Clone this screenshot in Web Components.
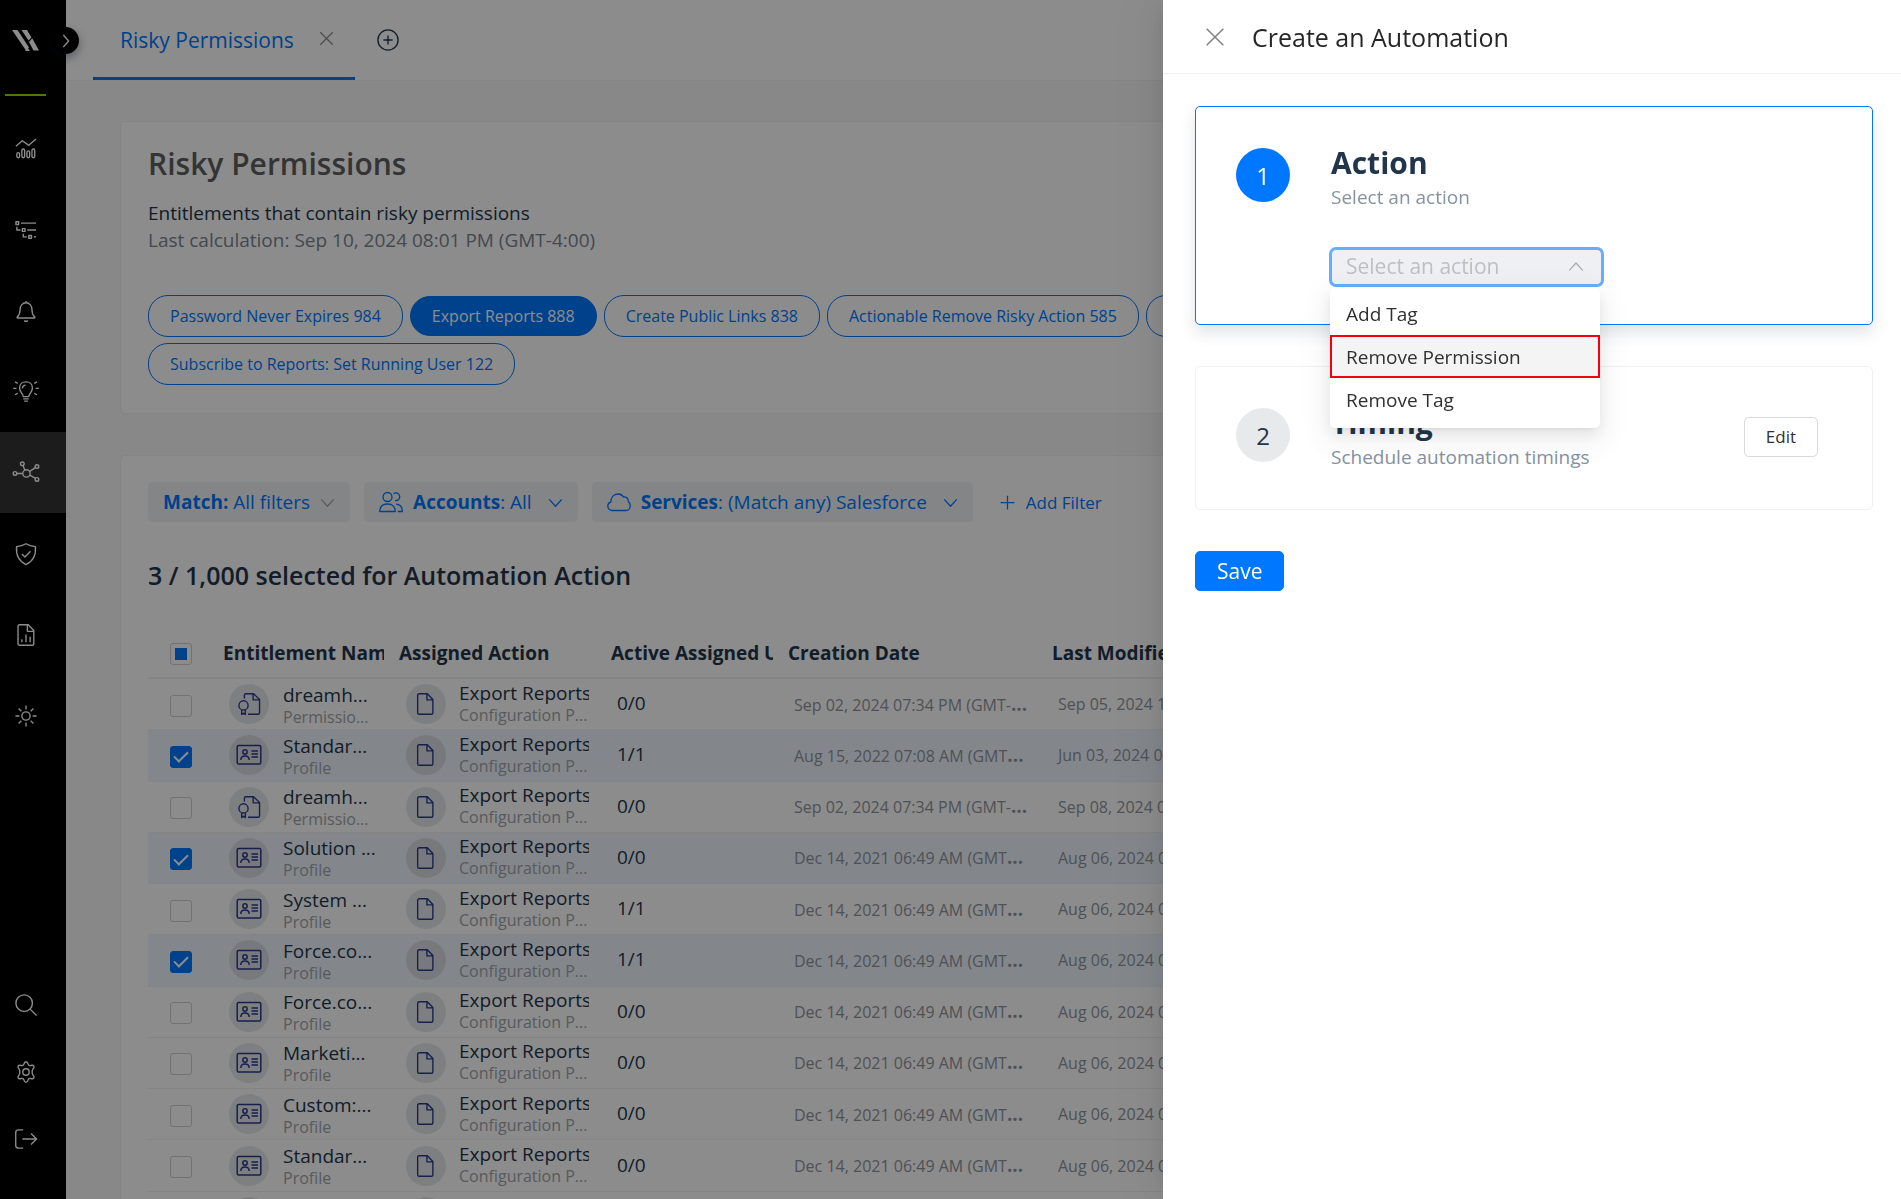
<!DOCTYPE html>
<html lang="en">
<head>
<meta charset="utf-8">
<title>Risky Permissions</title>
<style>
  html, body { height: 100%; }
  body { margin: 0; overflow: hidden; font-family: "Open Sans", "Noto Sans", sans-serif; color: #22364b; }
</style>
</head>
<body>
<app-shell></app-shell>

<script>
const ICONS = {
  logo: '<g fill="currentColor" stroke="none"><path d="M0 0h5.5l11.5 17.5-3 3z"/><path d="M9.500 0h5.500l4.500 7.500-3 3z"/><path d="M17 12l3.200-3.800L27 20.500h-5.500z"/><path d="M13 21l2.500-3.200L18 21z"/></g>',
  right: '<path d="M8 3l8 9-8 9"/>',
  down: '<path d="M2 7l10 11L22 7"/>',
  up: '<path d="M2 17L12 6l10 11"/>',
  close: '<path d="M2 2l20 20M22 2L2 22"/>',
  plus: '<path d="M12 1v22M1 12h22"/>',
  addCircle: '<circle cx="12" cy="12" r="11"/><path d="M12 7v10M7 12h10"/>',
  chart: '<path d="M1 9l7-6 7 5 8-7"/><rect x="2" y="16" width="3" height="5.500" rx="1.500"/><rect x="7.500" y="12" width="3" height="9.500" rx="1.500"/><rect x="13" y="14" width="3" height="7.500" rx="1.500"/><rect x="18.500" y="12" width="3" height="9.500" rx="1.500"/>',
  tree: '<rect x="1" y="3" width="3" height="3"/><path d="M6.500 4.500H23M2 8.500v3.500h4"/><rect x="8" y="10.500" width="3" height="3"/><path d="M13.500 12H23M9 16v3.500h4"/><rect x="15" y="18" width="3" height="3"/><path d="M20.500 19.500H23"/>',
  bell: '<path d="M12 1v2M2.500 18.500c2-2 3-4 3-8C5.500 6 8.500 3 12 3s6.500 3 6.500 7.500c0 4 1 6 3 8 .4.600.2 1.200-.5 1.200H3c-.7 0-.9-.6-.5-1.200zM10 22.500q2 1.500 4 0"/>',
  bulb: '<path d="M9 17c0-3-4-4.500-4-9.500C5 3.500 8 1 12 1s7 2.500 7 6.500c0 5-4 6.500-4 9.500zM9 19.500h6M10 22h4M8 8c.2-2 1.500-3.500 3.500-3.500M-2 8h3.500M22.500 8H26M0 1l3 1.600M24 1l-3 1.600M0 15l3-1.600M24 15l-3-1.600"/>',
  nodes: '<circle cx="12.500" cy="12.500" r="4"/><circle cx="0" cy="12.500" r="2"/><circle cx="8" cy="2" r="2"/><circle cx="24" cy="5" r="2"/><circle cx="24" cy="19" r="2"/><path d="M2 12.500h6.500M8.800 4l1.900 4.800M22.300 6.200L16 10.200M22.300 17.900l-6.200-3.500"/>',
  shield: '<path d="M12 .8c3 1.700 6.500 2.700 10.300 3.200C23 13 20 20 12 23.500 4 20 1 13 1.700 4 5.500 3.500 9 2.500 12 .8zM7.500 12l3.300 3.200L17 9"/>',
  report: '<path d="M5 .8h9.500L20.500 7v14.500c0 1-.7 1.700-1.700 1.700H5c-1 0-1.700-.7-1.700-1.700v-19C3.300 1.500 4 .8 5 .8zM13.500 1v7h7M7.500 20v-3.500M12 20v-8.500M16.500 20v-6"/>',
  sun: '<circle cx="12" cy="12" r="4.500"/><path d="M12 .5v4.300M12 19.200v4.300M.5 12h4.300M19.200 12h4.300M3.900 3.900l3 3M17.100 17.100l3 3M3.900 20.100l3-3M17.100 6.900l3-3"/>',
  search: '<circle cx="10" cy="10" r="9"/><path d="M16.500 16.500l7 7"/>',
  gear: '<circle cx="12" cy="12" r="3.500"/><path d="M9.800 3.200C10.300 1.300 11 .8 12 .8s1.700.5 2.200 2.400c.4 1.500 1.600 2.100 3 1.700 2-.6 2.900-.3 3.400.6s.400 1.800-1 3.200c-1.200 1.200-1.200 5.400 0 6.600 1.400 1.400 1.500 2.300 1 3.200s-1.400 1.200-3.400.6c-1.400-.4-2.600.2-3 1.700-.5 1.900-1.200 2.400-2.200 2.400s-1.700-.5-2.200-2.400c-.4-1.500-1.600-2.100-3-1.700-2 .6-2.900.3-3.400-.6s-.400-1.800 1-3.200c1.200-1.200 1.200-5.400 0-6.600-1.400-1.400-1.500-2.300-1-3.200s1.400-1.200 3.400-.6c1.400.4 2.600-.2 3-1.700z"/>',
  logout: '<path d="M9 2H4C2 2 .8 3 .8 5v14c0 2 1.200 3 3.200 3h5M8 12h15.500M17.500 6l6 6-6 6"/>',
  users: '<circle cx="8.500" cy="7" r="4.500"/><path d="M.8 21.500c0-5 3-7.500 7.700-7.500s7.700 2.500 7.700 7.500zM14.500 3.800a3.800 3.800 0 1 1 1.500 6.700M17 14.200c4 .2 6.300 2.800 6.300 7.300h-4.500"/>',
  cloud: '<path d="M5 20.500C2.500 20.500.8 18.500.8 16c0-2 1.200-3.500 3-4C4 7.500 6.500 4 11 4c2.500 0 4.500 1.200 5.500 3 3-.5 5 1.500 4.700 4.500 1.500.8 2 2.500 2 4.500 0 2.500-1.700 4.500-4 4.500z"/>',
  file: '<path d="M4.500.8h9L19.500 7v14.500c0 1-.6 1.700-1.600 1.700H4.500c-1 0-1.600-.7-1.600-1.700v-19c0-1 .6-1.700 1.600-1.700zM13 1v6.500h6.500"/>',
  cert: '<path d="M7 6V2.500C7 1.500 7.600.8 8.600.8H17L23.500 7v14.500c0 1-.6 1.700-1.600 1.700h-11M16.500 1v6.500h7"/><circle cx="6" cy="13.500" r="5"/><path d="M4 18.500v5l2-1.500 2 1.500v-5"/>',
  idcard: '<rect x=".2" y="2.500" width="23.600" height="18.500" rx="1.500"/><circle cx="8" cy="9" r="2.200"/><path d="M3.800 17c0-2.500 1.500-4 4.200-4s4.200 1.500 4.200 4M14.500 8h6.500M14.500 11h6.500M14.500 14h6.500"/>'
};

class Base extends HTMLElement {
  render(css, html) {
    this.attachShadow({ mode: 'open' }).innerHTML =
      `<style>*{box-sizing:border-box}button,select,input{font:inherit;margin:0}${css}</style>${html}`;
  }
}

class UiIcon extends Base {
  connectedCallback() {
    const s = this.getAttribute('size') || 24, w = this.getAttribute('weight') || 1.5;
    const box = this.getAttribute('name') === 'logo' ? '0 0 27 21' : '0 0 24 24';
    this.render(':host{display:inline-flex;flex:none}svg{display:block;overflow:visible}',
      `<svg width="${s}" height="${this.getAttribute('name') === 'logo' ? 21 : s}" viewBox="${box}" fill="none" stroke="currentColor" stroke-width="${w}" stroke-linejoin="round" aria-hidden="true">${ICONS[this.getAttribute('name')]}</svg>`);
  }
}

class SideNav extends Base {
  connectedCallback() {
    const link = (icon, label, on) => `<a href="#" aria-label="${label}"${on ? ' class="on" aria-current="page"' : ''}><ui-icon name="${icon}" size="22"></ui-icon></a>`;
    this.render(`
      :host{display:flex;flex-direction:column;position:relative;z-index:1;width:66px;flex:none;background:#000;color:#fff}
      .brand{display:flex;height:94px;padding:30px 0 0 12px}
      hr{width:41px;height:2px;margin:0 0 12px 5px;border:0;background:#8fdc00}
      a{display:flex;align-items:center;justify-content:center;height:81px;padding-right:14px;color:inherit}
      a.on{background:#333}
      .foot{margin-top:auto;padding-bottom:27px}
      .foot a{height:67px}
      button{position:absolute;left:52px;top:27px;width:27px;height:27px;padding:0;border:0;border-radius:50%;background:#000;color:#fff;display:flex;align-items:center;justify-content:center;box-shadow:0 4px 10px rgba(20,30,60,.4)}`,
      `<div class="brand"><ui-icon name="logo" size="27"></ui-icon></div><hr>
      <nav>${link('chart', 'Dashboard')}${link('tree', 'Inventory')}${link('bell', 'Alerts')}${link('bulb', 'Insights')}${link('nodes', 'Entitlements', true)}${link('shield', 'Security')}${link('report', 'Reports')}${link('sun', 'Automations')}</nav>
      <nav class="foot">${link('search', 'Search')}${link('gear', 'Settings')}${link('logout', 'Log out')}</nav>
      <button aria-label="Expand menu"><ui-icon name="right" size="16" weight="2"></ui-icon></button>`);
  }
}

class TabBar extends Base {
  connectedCallback() {
    this.render(`
      :host{display:flex;align-items:stretch;height:81px;padding-left:27px;background:#fff;border-bottom:1px solid #f0f0f0}
      .tab{display:flex;align-items:center;gap:25px;padding:0 21px 0 27px;border-bottom:3px solid #0077ff}
      a{color:#0077ff;text-decoration:none;font-size:21px;line-height:30px;padding-top:3px}
      button{display:flex;align-items:center;padding:0;border:0;background:none;color:#8c8c8c}
      .add{margin-left:22px;color:#22364b}`,
      `<div class="tab"><a href="#">Risky Permissions</a><button aria-label="Close tab"><ui-icon name="close" size="15" weight="2"></ui-icon></button></div>
      <button class="add" aria-label="Add tab"><ui-icon name="addCircle" size="22"></ui-icon></button>`);
  }
}

class UiCard extends Base {
  connectedCallback() {
    this.render(':host{display:block;background:#fff;border:1px solid #f0f0f0;border-radius:5px;padding:0 27px}', '<slot></slot>');
  }
}

class FilterPill extends Base {
  connectedCallback() {
    this.render(`
      :host{display:flex;flex:none}
      button{height:42px;padding:0 21px;border:1px solid #0077ff;border-radius:20px;background:#fff;color:#0077ff;font-size:16px;line-height:24px;white-space:nowrap}
      :host([active]) button{height:40px;background:#0077ff;color:#fff}
      :host([wide]) button{width:360px}`,
      '<button><slot></slot></button>');
  }
}

class RiskSummary extends Base {
  connectedCallback() {
    this.render(`
      :host{display:block}
      h1{margin:0;padding-top:22px;font-size:30px;line-height:40px;font-weight:600;color:#606060}
      p{margin:0;font-size:19px;line-height:27px}
      h1+p{margin-top:16px}
      .muted{color:#7a8591}
      .pills{display:flex;flex-direction:column;gap:6px;padding:41px 0 28px}
      .row{display:flex;align-items:center;gap:7px}`,
      `<ui-card><h1>Risky Permissions</h1>
      <p>Entitlements that contain risky permissions</p>
      <p class="muted">Last calculation: Sep 10, 2024 08:01 PM (GMT-4:00)</p>
      <div class="pills"><div class="row">
        <filter-pill>Password Never Expires 984</filter-pill>
        <filter-pill active>Export Reports 888</filter-pill>
        <filter-pill>Create Public Links 838</filter-pill>
        <filter-pill>Actionable Remove Risky Action 585</filter-pill>
        <filter-pill wide></filter-pill></div>
        <div class="row"><filter-pill>Subscribe to Reports: Set Running User 122</filter-pill></div>
      </div></ui-card>`);
  }
}

class FilterChip extends Base {
  connectedCallback() {
    const icon = this.getAttribute('icon');
    this.render(`
      :host{display:flex}
      button{display:flex;align-items:center;height:40px;padding:0 15px;border:0;border-radius:5px;background:#f0f2f5;color:#0077ff;font-size:19px;line-height:27px;white-space:nowrap}
      .lead{margin-right:10px}
      .tail{margin-left:16px}
      :host([muted]) .tail{margin-left:10px;color:#a5a5a5}`,
      `<button>${icon ? `<ui-icon class="lead" name="${icon}" weight="1.300"></ui-icon>` : ''}<span><slot></slot></span><ui-icon class="tail" name="down" size="15" weight="2"></ui-icon></button>`);
  }
}

class EntitlementTable extends Base {
  connectedCallback() {
    const P = 'Permissio...', F = 'Profile', D = 'Dec 14, 2021 06:49 AM (GMT', L = 'Aug 06, 2024 0';
    const rows = [
      ['dreamh...', P, '0/0', 'Sep 02, 2024 07:34 PM (GMT-', 'Sep 05, 2024 1'],
      ['Standar...', F, '1/1', 'Aug 15, 2022 07:08 AM (GMT', 'Jun 03, 2024 0', 1],
      ['dreamh...', P, '0/0', 'Sep 02, 2024 07:34 PM (GMT-', 'Sep 08, 2024 0'],
      ['Solution ...', F, '0/0', D, L, 1],
      ['System ...', F, '1/1', D, L],
      ['Force.co...', F, '1/1', D, L, 1],
      ['Force.co...', F, '0/0', D, L],
      ['Marketi...', F, '0/0', D, L],
      ['Custom:...', F, '0/0', D, L],
      ['Standar...', F, '0/0', D, L],
      ['', '', '', '', '']
    ];
    const body = rows.map(([n, k, a, c, m, on]) => `<tr${on ? ' class="on"' : ''}>
      <td class="ck"><input type="checkbox" aria-label="Select row"${on ? ' checked' : ''}></td>
      <td><div class="who name"><i><ui-icon name="${k === P ? 'cert' : 'idcard'}" size="${k === P ? 22 : 24}"></ui-icon></i><div>${n}<small>${k}</small></div></div></td>
      <td><div class="who act"><i><ui-icon name="file" size="22"></ui-icon></i><div>Export Reports<small>Configuration P...</small></div></div></td>
      <td class="num">${a}</td>
      <td class="date">${c}${c ? '<b>...</b>' : ''}</td>
      <td class="date">${m}</td></tr>`).join('');
    this.render(`
      :host{display:block}
      table{width:100%;height:615px;table-layout:fixed;border-collapse:separate;border-spacing:0;font-size:19px;line-height:22px}
      .c0{width:67px}.c1{width:176px}.c2{width:212px}.c3{width:177px}.c4{width:264px}
      th,td{height:51px;padding:0 7px 0 8px;text-align:left;border-bottom:1px solid #f0f0f0;white-space:nowrap;overflow:hidden}
      th{font-weight:700;border-bottom-width:2px}
      th span{display:block;overflow:hidden;line-height:28px}
      .ck{padding:3px 0 0 22px}
      .on td{background:#eff6ff}
      .who{display:flex;align-items:center;gap:14px;padding-left:6px}
      .who i{display:flex;align-items:center;justify-content:center;width:40px;height:40px;flex:none;border-radius:50%;background:#e6e8ec;color:#2a3a8c}
      .on .who i{background:#dadde3}
      .who div{overflow:hidden}
      .name div{padding-top:3px}
      .act{padding:0 7px;gap:13px}
      .act div{padding-bottom:1px}
      small{display:block;font-size:16px;line-height:22px;color:#a0a5ac}
      .num{padding-left:14px;padding-bottom:2px}
      .date{padding-left:14px;font-size:16px;color:#8f959d}
      .date b{font-size:19px;font-weight:700}
      input{display:flex;align-items:center;justify-content:center;appearance:none;width:22px;height:22px;border:1px solid #d0d0d0;border-radius:3px;background:#fff}
      input:indeterminate::after{content:"";width:12px;height:12px;background:#0077ff}
      input:checked{background:#0077ff;border-color:#0077ff}
      input:checked::after{content:"";width:6px;height:12px;margin-top:-3px;border:solid #fff;border-width:0 2px 2px 0;transform:rotate(45deg)}`,
      `<table><colgroup><col class="c0"><col class="c1"><col class="c2"><col class="c3"><col class="c4"><col></colgroup>
      <thead><tr><th class="ck"><input id="all" type="checkbox" aria-label="Select all"></th><th><span>Entitlement Nam</span></th><th>Assigned Action</th><th><span>Active Assigned U</span></th><th>Creation Date</th><th>Last Modified</th></tr></thead>
      <tbody>${body}</tbody></table>`);
    this.shadowRoot.getElementById('all').indeterminate = true;
  }
}

class EntitlementList extends Base {
  connectedCallback() {
    this.render(`
      :host{display:block}
      .bar{display:flex;align-items:center;gap:14px;padding-top:26px}
      .add{display:flex;align-items:center;gap:11px;margin-left:13px;padding:0;border:0;background:none;color:#0077ff;font-size:17px;line-height:27px}
      h2{margin:35px 0;font-size:25px;line-height:36px;font-weight:600}
      b{font-weight:700}`,
      `<ui-card><div class="bar">
        <filter-chip muted><b>Match:</b> All filters</filter-chip>
        <filter-chip icon="users"><b>Accounts</b>: All</filter-chip>
        <filter-chip icon="cloud"><b>Services</b>: (Match any) Salesforce</filter-chip>
        <button class="add"><ui-icon name="plus" size="15" weight="2"></ui-icon>Add Filter</button></div>
      <h2>3 / 1,000 selected for Automation Action</h2>
      <entitlement-table></entitlement-table></ui-card>`);
  }
}

class ActionSelect extends Base {
  connectedCallback() {
    this.render(`
      :host{display:block;position:relative;width:271px;max-width:100%}
      select{display:block;appearance:none;width:100%;height:36px;padding:0 14px 2px;border:1px solid #66adff;border-radius:5px;background:#eff0f4;color:#bfbfbf;font-size:21px;line-height:30px;box-shadow:0 0 0 2px #66adff;opacity:1}
      ui-icon{position:absolute;right:18px;top:10px;color:#a8a8a8}
      ul{position:absolute;left:-1px;top:39px;width:270px;height:140px;margin:0;padding:4px 0 0;list-style:none;border-radius:5px;background:#fff;color:#303030;box-shadow:0 3px 6px -4px rgba(0,0,0,.12),0 6px 16px rgba(0,0,0,.08),0 9px 28px 8px rgba(0,0,0,.05)}
      li{height:43px;padding:0 16px;font-size:19px;line-height:44px}
      li.on{border:2px solid #f5000c;padding:0 14px;line-height:40px;background:#f4f4f4}`,
      `<select aria-label="Select an action"><option>Select an action</option></select><ui-icon name="up" size="16" weight="1.800"></ui-icon>
      <ul role="listbox"><li role="option">Add Tag</li><li role="option" aria-selected="true" class="on">Remove Permission</li><li role="option">Remove Tag</li></ul>`);
  }
}

class StepCard extends Base {
  connectedCallback() {
    this.render(`
      :host{display:flex;align-items:center;position:relative;padding:35px 54px 38px 40px;border:1px solid #f0f0f0;border-radius:5px;background:#fff}
      :host([active]){z-index:1;padding-bottom:39px;border-color:#0077ff;box-shadow:0 8px 16px rgba(30,50,80,.13)}
      .step{display:flex;align-items:flex-start;gap:41px;flex:1}
      .n{display:flex;align-items:center;justify-content:center;width:54px;height:54px;margin-top:6px;flex:none;border-radius:50%;background:#e8e9eb;font-size:24px}
      :host([active]) .n{background:#0077ff;color:#fff}
      h3{margin:0;font-size:30px;line-height:42px;font-weight:700}
      p{margin:0;font-size:19px;line-height:27px;color:#8592a2}
      ::slotted(action-select){margin-top:38px}`,
      `<div class="step"><span class="n">${this.getAttribute('number')}</span><div><h3>${this.getAttribute('heading')}</h3><p>${this.getAttribute('hint')}</p><slot></slot></div></div><slot name="end"></slot>`);
  }
}

class AutomationDrawer extends Base {
  connectedCallback() {
    this.render(`
      :host{display:block;position:fixed;z-index:3;top:0;right:0;bottom:0;width:738px;background:#fff;box-shadow:-6px 0 16px -8px rgba(0,0,0,.08),-9px 0 28px rgba(0,0,0,.05),-12px 0 48px 16px rgba(0,0,0,.03)}
      header{display:flex;align-items:center;gap:27px;height:74px;padding-left:42px;border-bottom:1px solid #f0f0f0}
      header button{display:flex;padding:0;border:0;background:none;color:#808080}
      h2{margin:0;font-size:25px;line-height:32px;font-weight:400;color:#262626}
      form{display:flex;flex-direction:column;gap:41px;padding:32px 28px 32px 32px}
      .edit{height:40px;padding:0 21px;border:1px solid #d9d9d9;border-radius:5px;background:#fff;color:#303030;font-size:17px}
      .save{align-self:flex-start;height:40px;padding:0 21px;border:1px solid #0077ff;border-radius:5px;background:#0077ff;color:#fff;font-size:21px;line-height:30px}`,
      `<header><button aria-label="Close"><ui-icon name="close" size="20" weight="1.800"></ui-icon></button><h2>Create an Automation</h2></header>
      <form>
        <step-card active number="1" heading="Action" hint="Select an action"><action-select></action-select></step-card>
        <step-card number="2" heading="Timing" hint="Schedule automation timings"><button slot="end" type="button" class="edit">Edit</button></step-card>
        <button type="button" class="save">Save</button>
      </form>`);
  }
}

class AppShell extends Base {
  connectedCallback() {
    this.render(`
      :host{display:flex;height:100vh;overflow:hidden;background:#f7f7f8}
      main{flex:1;min-width:0}
      .page{display:flex;flex-direction:column;gap:41px;padding:40px 54px 0}
      .mask{position:fixed;z-index:2;inset:0;background:rgba(0,0,0,.45)}`,
      `<side-nav></side-nav><main><tab-bar></tab-bar><div class="page"><risk-summary></risk-summary><entitlement-list></entitlement-list></div></main>
      <div class="mask"></div><automation-drawer></automation-drawer>`);
  }
}

for (const [n, c] of Object.entries({ 'ui-icon': UiIcon, 'ui-card': UiCard, 'filter-pill': FilterPill, 'filter-chip': FilterChip, 'side-nav': SideNav, 'tab-bar': TabBar, 'risk-summary': RiskSummary, 'entitlement-table': EntitlementTable, 'entitlement-list': EntitlementList, 'action-select': ActionSelect, 'step-card': StepCard, 'automation-drawer': AutomationDrawer, 'app-shell': AppShell })) customElements.define(n, c);
</script>
</body>
</html>
